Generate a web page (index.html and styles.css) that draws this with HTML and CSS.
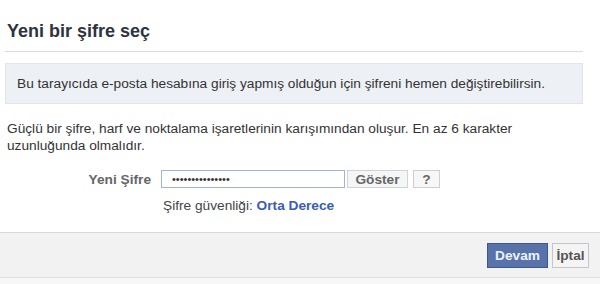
FILE: index.html
```html
<!DOCTYPE html>
<html lang="tr">
<head>
<meta charset="utf-8">
<title>Yeni bir şifre seç</title>
<link rel="stylesheet" href="styles.css">
</head>
<body>
<div class="page">
  <div class="content">
    <h2 class="title">Yeni bir şifre seç</h2>
    <div class="info">Bu tarayıcıda e-posta hesabına giriş yapmış olduğun için şifreni hemen değiştirebilirsin.</div>
    <p class="desc">Güçlü bir şifre, harf ve noktalama işaretlerinin karışımından oluşur. En az 6 karakter uzunluğunda olmalıdır.</p>
    <div class="row">
      <label class="label" for="pw">Yeni Şifre</label>
      <input class="input" id="pw" type="password" value="abcdefghijklmno">
      <button class="btn show">Göster</button>
      <button class="btn help">?</button>
    </div>
    <div class="strength">Şifre güvenliği: <span class="level">Orta Derece</span></div>
  </div>
  <div class="footer">
    <button class="btn primary">Devam</button>
    <button class="btn cancel">İptal</button>
  </div>
</div>
</body>
</html>
```
FILE: styles.css
```css
* { box-sizing: border-box; }
html, body { margin: 0; padding: 0; }
body {
  font-family: "Liberation Sans", Arial, sans-serif;
  font-size: 13.7px;
  color: #333;
  background: #f7f7f7;
}
.page { background: #fff; }
.content { padding: 0 17px 18px 5px; }
.title {
  margin: 0;
  padding: 21px 2px 10px;
  font-size: 18px;
  line-height: 20px;
  font-weight: bold;
  color: #2e3340;
  border-bottom: 1px solid #dcdcdc;
}
.info {
  margin-top: 11px;
  padding: 11px 11px;
  line-height: 17px;
  background: #edf0f5;
  border: 1px solid #e2e5ec;
  color: #333;
}
.desc {
  margin: 16px 0 0 2px;
  line-height: 17px;
}
.row {
  display: flex;
  align-items: center;
  margin-top: 16px;
  height: 18px;
}
.label {
  flex: none;
  width: 156px;
  padding-right: 10px;
  text-align: right;
  font-weight: bold;
  color: #666;
}
.input {
  flex: none;
  width: 184px;
  height: 18px;
  margin: 0;
  padding: 0 0 0 10px;
  border: 1px solid #9eb4dd;
  font-family: "Liberation Sans", Arial, sans-serif;
  font-size: 11px;
  color: #333;
  outline: none;
}
.btn {
  font-family: "Liberation Sans", Arial, sans-serif;
  font-size: 13.7px;
  font-weight: bold;
  margin: 0;
  padding: 0;
  cursor: pointer;
}
.show {
  flex: none;
  margin-left: 2px;
  width: 61px;
  height: 18px;
  background: #f5f6f7;
  border: 1px solid #d3d3d3;
  color: #666;
}
.help {
  flex: none;
  margin-left: 5px;
  width: 27px;
  height: 18px;
  background: #f7f7f7;
  border: 1px solid #cfcfcf;
  color: #666;
}
.strength {
  margin: 10px 0 0 158px;
  line-height: 16px;
  color: #444;
}
.level { font-weight: bold; color: #3b5bb5; }
.footer {
  display: flex;
  justify-content: flex-end;
  gap: 4px;
  padding: 10px 11px 9px 0;
  background: #f2f2f2;
  border-top: 1px solid #dadada;
  border-bottom: 1px solid #e0e0e0;
}
.primary {
  width: 61px;
  height: 25px;
  background: #5873a9;
  border: 1px solid #3d5690;
  color: #eef2fb;
}
.cancel {
  width: 37px;
  height: 25px;
  background: #f4f4f4;
  border: 1px solid #c6c6c6;
  color: #555;
}
```
